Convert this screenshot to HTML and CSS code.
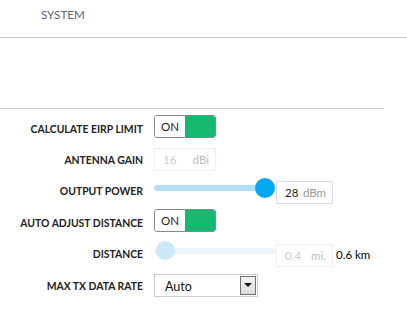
FILE: index.html
```html
<!DOCTYPE html>
<html lang="en">
<head>
  <meta charset="UTF-8">
  <title>Wireless settings</title>
  <link rel="stylesheet" href="styles.css">
</head>
<body>
  <div class="tabs">
    <span class="tab">SYSTEM</span>
  </div>

  <div class="spacer"></div>

  <div class="settings">
    <div class="row">
      <label class="label">CALCULATE EIRP LIMIT</label>
      <div class="control">
        <div class="toggle"><span class="toggle-on">ON</span><span class="toggle-bar"></span></div>
      </div>
    </div>

    <div class="row">
      <label class="label">ANTENNA GAIN</label>
      <div class="control">
        <div class="field field-disabled field-gain"><span class="val">16</span><span class="unit">dBi</span></div>
      </div>
    </div>

    <div class="row">
      <label class="label">OUTPUT POWER</label>
      <div class="control">
        <div class="slider">
          <div class="track"></div>
          <div class="knob"></div>
        </div>
        <div class="field field-value"><span class="val">28</span><span class="unit">dBm</span></div>
      </div>
    </div>

    <div class="row">
      <label class="label">AUTO ADJUST DISTANCE</label>
      <div class="control">
        <div class="toggle"><span class="toggle-on">ON</span><span class="toggle-bar"></span></div>
      </div>
    </div>

    <div class="row">
      <label class="label">DISTANCE</label>
      <div class="control">
        <div class="slider slider-disabled">
          <div class="track"></div>
          <div class="knob"></div>
        </div>
        <div class="field field-disabled field-value"><span class="val">0.4</span><span class="unit">mi.</span></div>
        <span class="extra">0.6 km</span>
      </div>
    </div>

    <div class="row">
      <label class="label">MAX TX DATA RATE</label>
      <div class="control">
        <div class="select">
          <span class="select-text">Auto</span>
          <span class="select-btn"><span class="arrow"></span></span>
        </div>
      </div>
    </div>
  </div>
</body>
</html>
```

FILE: styles.css
```css
body {
  margin: 0;
  font-family: Lato, 'Open Sans', sans-serif;
  color: #222;
  background: #fff;
}

.tabs {
  height: 38px;
  border-bottom: 1px solid #c8c8c8;
  padding-left: 41px;
  box-sizing: border-box;
}

.tab {
  display: inline-block;
  font-size: 11.6px;
  line-height: 30px;
  color: #5b6373;
}

.spacer {
  height: 70px;
  width: 384px;
  border-bottom: 1px solid #c8c8c8;
}

.settings {
  padding-top: 3px;
}

.row {
  display: flex;
  align-items: center;
  height: 31.4px;
}

.label {
  width: 143px;
  text-align: right;
  font-size: 10.4px;
  font-weight: bold;
  color: #222;
  margin-right: 11px;
  padding-top: 2px;
}

.control {
  display: flex;
  align-items: center;
}

.toggle {
  display: flex;
  width: 62px;
  height: 23px;
  box-sizing: border-box;
  border: 1px solid #888;
  border-radius: 3px;
  overflow: hidden;
  margin-top: -3px;
}

.toggle-on {
  width: 30px;
  font-size: 11.5px;
  line-height: 21px;
  text-align: center;
  color: #222;
  background: #fff;
}

.toggle-bar {
  flex: 1;
  background: #17b86f;
}

.field {
  display: flex;
  align-items: center;
  box-sizing: border-box;
  height: 23px;
  border: 1px solid #ddd;
  font-size: 11.5px;
  padding: 0 6px 0 8px;
}

.field .val {
  flex: 1;
}

.field .unit {
  color: #999;
}

.field-gain {
  width: 62px;
  margin-top: 1px;
}

.field-value {
  width: 57px;
  margin-top: 4px;
}

.field-disabled {
  border-color: #eee;
  color: #ccc;
}

.field-disabled .unit {
  color: #bbb;
}

.slider {
  position: relative;
  width: 122px;
  height: 20px;
  margin-top: -4px;
}

.track {
  position: absolute;
  left: 0;
  right: 11px;
  top: 7px;
  height: 6px;
  border-radius: 3px;
  background: #b4e0f6;
}

.knob {
  position: absolute;
  left: 101px;
  top: 0;
  width: 20px;
  height: 20px;
  border-radius: 50%;
  background: #03a9f1;
}

.slider-disabled .track {
  background: #eef6fc;
  right: 0;
}

.slider-disabled .knob {
  left: 2px;
  width: 19px;
  height: 19px;
  background: #cde9f9;
}

.extra {
  font-size: 11.5px;
  margin-left: 3px;
  margin-top: 2px;
  color: #000;
}

.select {
  display: flex;
  align-items: center;
  width: 104px;
  height: 23px;
  box-sizing: border-box;
  border: 1px solid #ccc;
  margin-top: 1px;
}

.select-text {
  flex: 1;
  font-size: 12.5px;
  padding-left: 10px;
  padding-top: 2px;
  color: #111;
}

.select-btn {
  display: flex;
  align-items: center;
  justify-content: center;
  width: 16px;
  height: 19px;
  box-sizing: border-box;
  margin-right: 1px;
  border: 1px solid #707070;
  background: linear-gradient(#f4f4f4, #dcdcdc);
}

.arrow {
  width: 0;
  height: 0;
  border-left: 4px solid transparent;
  border-right: 4px solid transparent;
  border-top: 4px solid #111;
}
```
